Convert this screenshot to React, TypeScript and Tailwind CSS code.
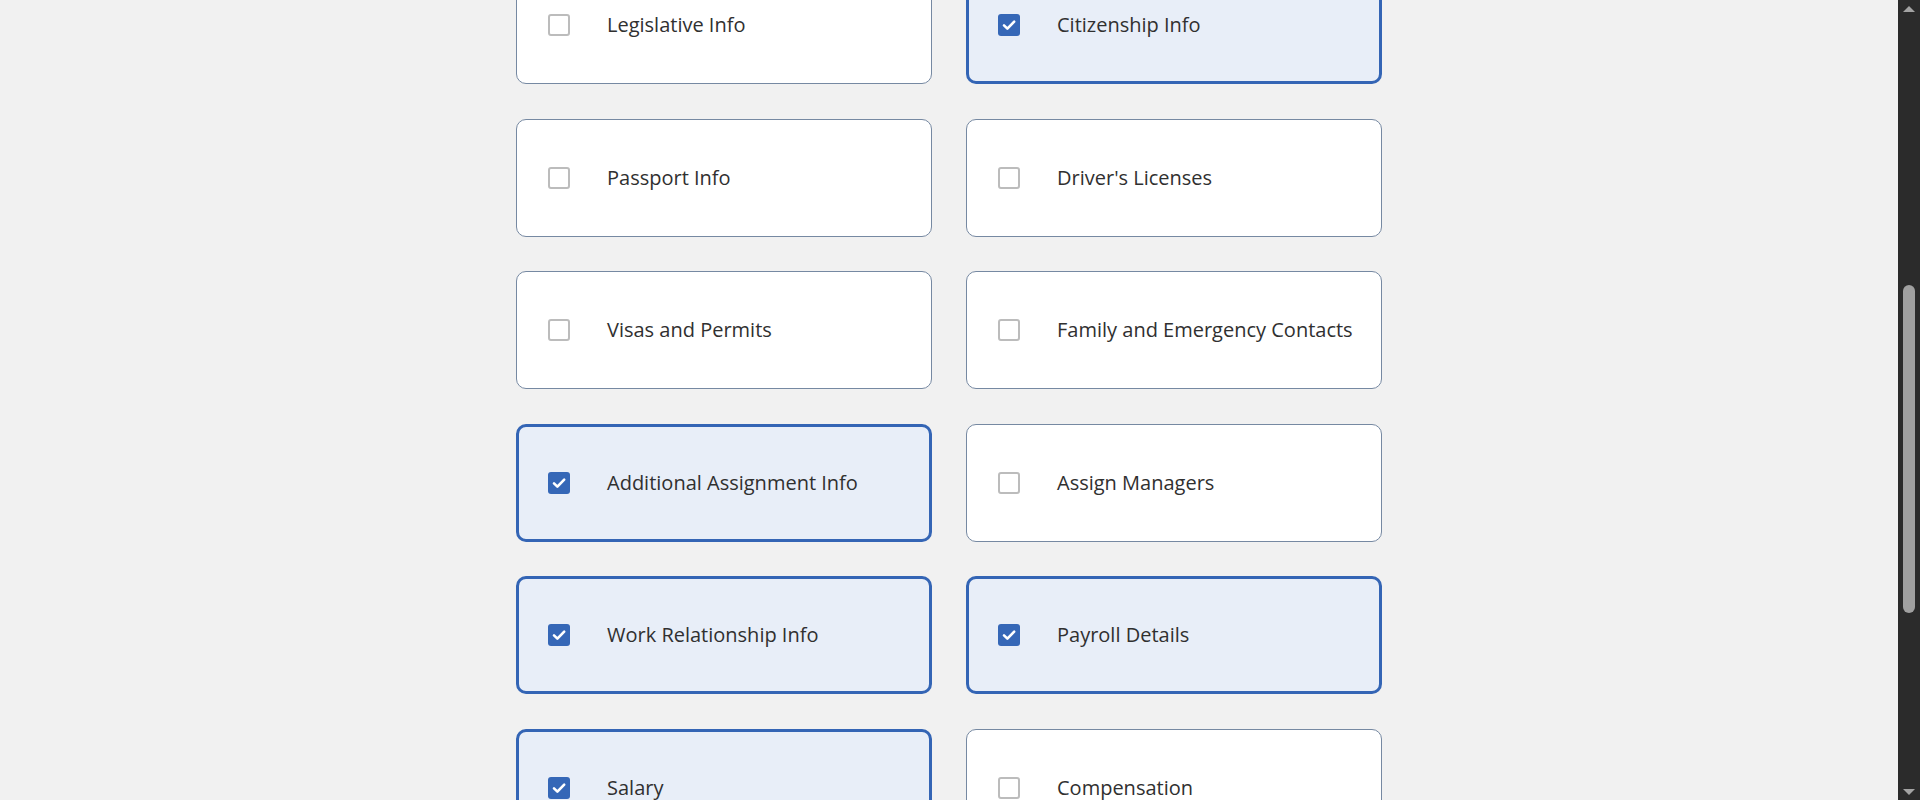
import React, { useLayoutEffect, useRef } from 'react';

type Section = { label: string; checked: boolean };

// rows of the section picker, two per row
const sections: Section[] = [
  { label: 'Name', checked: true },
  { label: 'Biographical Info', checked: true },
  { label: 'Addresses', checked: false },
  { label: 'Phones', checked: false },
  { label: 'Emails', checked: false },
  { label: 'National Identifiers', checked: true },
  { label: 'Disabilities', checked: false },
  { label: 'Communication Methods', checked: false },
  { label: 'Legislative Info', checked: false },
  { label: 'Citizenship Info', checked: true },
  { label: 'Passport Info', checked: false },
  { label: "Driver's Licenses", checked: false },
  { label: 'Visas and Permits', checked: false },
  { label: 'Family and Emergency Contacts', checked: false },
  { label: 'Additional Assignment Info', checked: true },
  { label: 'Assign Managers', checked: false },
  { label: 'Work Relationship Info', checked: true },
  { label: 'Payroll Details', checked: true },
  { label: 'Salary', checked: true },
  { label: 'Compensation', checked: false },
  { label: 'Direct Reports', checked: false },
  { label: 'Documents', checked: false },
  { label: 'Absences', checked: false },
  { label: 'Talent Profile', checked: false },
];

const Checkbox: React.FC<{ checked: boolean }> = ({ checked }) =>
  checked ? (
    <span className="flex h-[22px] w-[22px] shrink-0 items-center justify-center rounded-[3px] bg-[#3567b7]">
      <svg viewBox="0 0 22 22" className="h-[22px] w-[22px]" fill="none">
        <path d="M6 11.3l3.4 3.4 6.8-7" stroke="#fff" strokeWidth="2.6" strokeLinecap="round" strokeLinejoin="round" />
      </svg>
    </span>
  ) : (
    <span className="h-[22px] w-[22px] shrink-0 rounded-[3px] border-2 border-[#bcbcbc] bg-white" />
  );

const SectionCard: React.FC<Section> = ({ label, checked }) => (
  <label
    className={
      checked
        ? 'flex h-[118px] cursor-pointer items-center rounded-[10px] border-[3px] border-[#3465b5] bg-[#e8eef8] pl-[29px]'
        : 'flex h-[118px] cursor-pointer items-center rounded-[10px] border border-[#7689a2] bg-white pl-[31px]'
    }
  >
    <Checkbox checked={checked} />
    <span className="ml-[37px] text-[20px] text-[#303030]">{label}</span>
  </label>
);

// window scrollbar, drawn as a strip because headless hides the real one
const ScrollStrip: React.FC = () => (
  <div className="flex h-screen w-[22px] shrink-0 flex-col bg-[#2b2b2b]">
    <div className="flex h-[17px] items-center justify-center">
      <svg viewBox="0 0 12 6" className="h-[6px] w-[12px]">
        <path d="M0 6L6 0l6 6z" fill="#a3a3a3" />
      </svg>
    </div>
    <div className="flex flex-1 flex-col items-center pt-[268px]">
      <div className="h-[328px] w-[12px] rounded-full bg-[#a0a0a0]" />
    </div>
    <div className="flex h-[17px] items-center justify-center">
      <svg viewBox="0 0 12 6" className="h-[6px] w-[12px]">
        <path d="M0 0l6 6 6-6z" fill="#a3a3a3" />
      </svg>
    </div>
  </div>
);

export default function App() {
  const scroller = useRef<HTMLDivElement>(null);

  useLayoutEffect(() => {
    if (scroller.current) scroller.current.scrollTop = 661;
  }, []);

  return (
    <div className="flex h-screen bg-[#f1f1f1] font-['Open_Sans','Noto_Sans',sans-serif]">
      <div ref={scroller} className="h-screen flex-1 overflow-hidden">
        <div className="mx-auto grid w-[866px] grid-cols-2 gap-x-[34px] gap-y-[34.5px] pt-[17px] pb-[79px]">
          {sections.map((s) => (
            <SectionCard key={s.label} {...s} />
          ))}
        </div>
      </div>
      <ScrollStrip />
    </div>
  );
}
